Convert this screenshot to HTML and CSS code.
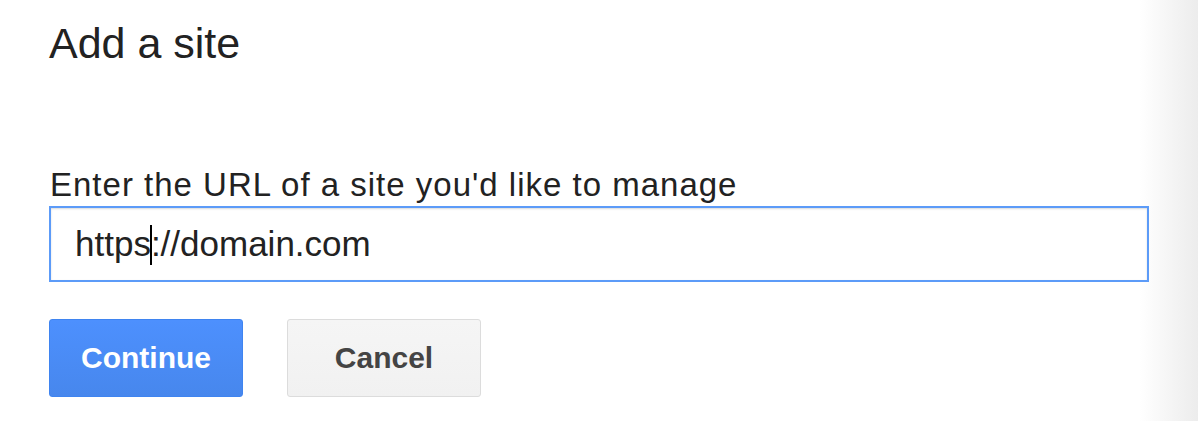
FILE: index.html
```html
<!DOCTYPE html>
<html>
<head>
<title>Add a site</title>
<link rel="stylesheet" href="styles.css">
</head>
<body>
<div class="page">
<h1 class="title">Add a site</h1>
<form class="add-site" onsubmit="return false">
  <label class="field-label">Enter the URL of a site you'd like to manage</label>
  <div class="url-field"><span>https</span><span class="caret"></span><span>://domain.com</span></div>
  <div class="actions">
    <button class="btn btn-primary" type="submit">Continue</button>
    <button class="btn btn-default" type="button">Cancel</button>
  </div>
</form>
</div>
</body>
</html>
```

FILE: styles.css
```css
body {
  margin: 0;
  background-color: #fff;
  font-family: "Liberation Sans", Arial, sans-serif;
  color: #222;
}
.page {
  height: 421px;
  padding: 19px 0 0 49px;
  box-sizing: border-box;
  background: linear-gradient(to right, #fff 1140px, #ececec 1198px, #fff 1198px);
}
.title {
  margin: 0;
  font-size: 43px;
  font-weight: normal;
  line-height: 48px;
  color: #222;
}
.add-site {
  margin-top: 100px;
  display: flex;
  flex-direction: column;
  align-items: flex-start;
}
.field-label {
  font-size: 33px;
  line-height: 36px;
  letter-spacing: 1px;
  margin-left: 1px;
  margin-bottom: 3px;
}
.url-field {
  width: 1100px;
  height: 76px;
  box-sizing: border-box;
  padding: 16px 24px 0;
  border: 2px solid #5c9bf8;
  box-shadow: inset 0 1px 2px rgba(0, 0, 0, 0.15);
  background-color: #fff;
  font-size: 35px;
  line-height: 40px;
  color: #222;
  white-space: nowrap;
}
.caret {
  display: inline-block;
  width: 2px;
  height: 40px;
  margin: 0 -1px;
  vertical-align: top;
  background-color: #000;
  position: relative;
  top: 1px;
}
.actions {
  display: flex;
  gap: 44px;
  margin-top: 37px;
}
.btn {
  width: 194px;
  height: 78px;
  border-radius: 3px;
  font-family: "Liberation Sans", Arial, sans-serif;
  font-size: 30px;
  font-weight: bold;
  cursor: pointer;
}
.btn-primary {
  color: #fff;
  background: linear-gradient(#4d90fe, #4787ed);
  border: 1px solid #3f84f0;
}
.btn-default {
  color: #444;
  background: linear-gradient(#f5f5f5, #f1f1f1);
  border: 1px solid #dcdcdc;
}
```
